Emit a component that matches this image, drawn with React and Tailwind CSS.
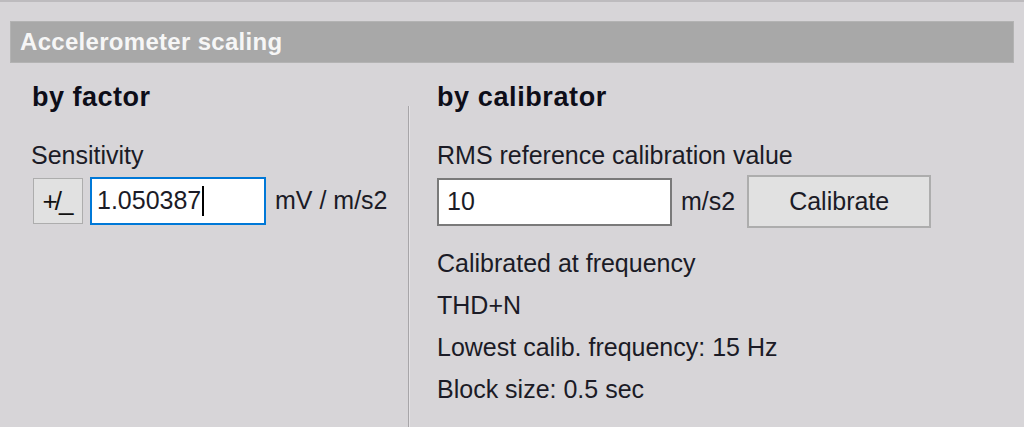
export default function App() {
  const font = { fontFamily: '"Liberation Sans", Arial, sans-serif' };
  return (
    <div
      className="w-[1024px] h-[427px] bg-[#d7d5d8] border-t-2 border-[#bdbbbe] overflow-hidden text-[#1b1b26]"
      style={font}
    >
      <div className="mt-[19px] mx-[10px] h-[42px] bg-[#a8a8a8] border border-[#b3b3b3] pl-[9px] flex items-center">
        <span className="text-[24px] leading-[28px] font-bold tracking-[0.3px] text-[#f6f6f6]">Accelerometer scaling</span>
      </div>
      <div className="flex h-[364px]">
        <div className="w-[408px] pl-[32px] flex flex-col">
          <div className="mt-[19px] h-[30px] leading-[30px] text-[27px] font-bold tracking-[0.5px] text-[#0d0d18]">by factor</div>
          <div className="mt-[29px] h-[28px] leading-[28px] text-[25px] -ml-[1px]">Sensitivity</div>
          <div className="mt-[8px] flex items-center h-[48px]">
            <div className="ml-[1px] w-[50px] h-[46px] bg-[#e1e1e1] border border-[#adadad] flex items-center justify-center text-[26px] leading-none text-[#111]">
              <span className="tracking-[-3px] pr-[3px]">+/_</span>
            </div>
            <div className="ml-[7px] w-[176px] h-[48px] bg-white border-2 border-[#0078d7] flex items-center pl-[5px] text-[25px]">
              <span>1.050387</span>
              <span className="w-[2px] h-[30px] bg-black ml-[1px]"></span>
            </div>
            <span className="ml-[9px] text-[25px]">mV / m/s2</span>
          </div>
        </div>
        <div className="mt-[43px] w-[2px] bg-[#a7a5a8] border-r border-[#e4e2e5]"></div>
        <div className="pl-[27px] flex flex-col">
          <div className="mt-[19px] h-[30px] leading-[30px] text-[27px] font-bold tracking-[0.6px] text-[#0d0d18]">by calibrator</div>
          <div className="mt-[29px] h-[28px] leading-[28px] text-[25px]">RMS reference calibration value</div>
          <div className="mt-[6px] flex items-center h-[53px]">
            <div className="w-[235px] h-[48px] bg-white border-2 border-[#7a7a7a] flex items-center pl-[8px] text-[25px]">
              <span>10</span>
            </div>
            <span className="ml-[9px] text-[25px]">m/s2</span>
            <div className="ml-[12px] w-[184px] h-[53px] bg-[#e1e1e1] border-2 border-[#adadad] flex items-center justify-center text-[25px]">
              Calibrate
            </div>
          </div>
          <div className="mt-[21px] flex flex-col text-[25px] leading-[28px] gap-[14px]">
            <span>Calibrated at frequency</span>
            <span>THD+N</span>
            <span>Lowest calib. frequency: 15 Hz</span>
            <span>Block size: 0.5 sec</span>
          </div>
        </div>
      </div>
    </div>
  );
}
